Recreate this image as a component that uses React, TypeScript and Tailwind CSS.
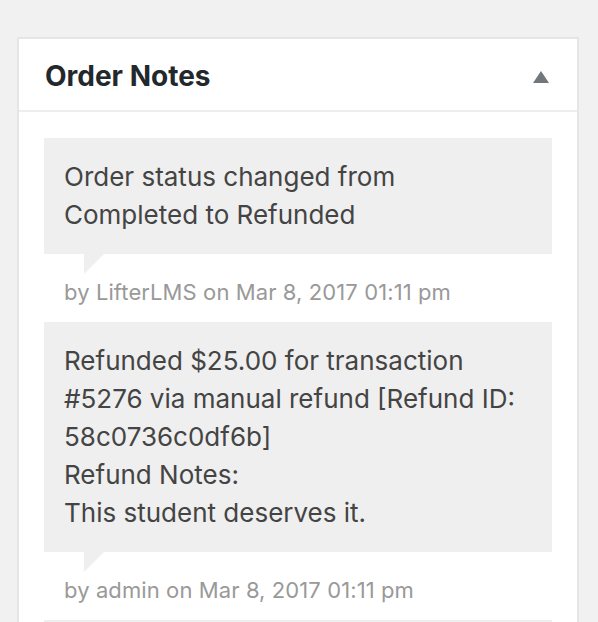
import React from "react";

const notes = [
  {
    lines: ["Order status changed from", "Completed to Refunded"],
    meta: "by LifterLMS on Mar 8, 2017 01:11 pm",
  },
  {
    lines: [
      "Refunded $25.00 for transaction",
      "#5276 via manual refund [Refund ID:",
      "58c0736c0df6b]",
      "Refund Notes:",
      "This student deserves it.",
    ],
    meta: "by admin on Mar 8, 2017 01:11 pm",
  },
];

function Note({ lines, meta }: { lines: string[]; meta: string }) {
  return (
    <li className="list-none">
      <div className="relative bg-[#efefef] px-[20px] py-[20px] text-[26px] leading-[38px] text-[#444]">
        {lines.map((l, i) => (
          <div key={i}>{l}</div>
        ))}
        <span className="absolute left-[40px] top-full h-0 w-0 border-t-[20px] border-r-[20px] border-t-[#efefef] border-r-transparent" />
      </div>
      <div className="h-[68px] px-[20px] pt-[22px] text-[22px] leading-[33px] tracking-[0.1px] text-[#999]">{meta}</div>
    </li>
  );
}

export default function App() {
  return (
    <div
      className="h-[622px] w-[598px] overflow-hidden bg-[#f1f1f1] pl-[17px] pt-[37px]"
      style={{ fontFamily: "Inter, 'Liberation Sans', sans-serif" }}
    >
      <div className="w-[562px] border-2 border-[#e5e5e5] bg-white">
        <div className="flex h-[73px] items-center justify-between border-b-2 border-[#eeeeee] pl-[26px] pr-[28px] pt-[3px]">
          <h2 className="text-[28px] font-bold leading-none text-[#23282d]">Order Notes</h2>
          <svg width="16" height="12" viewBox="0 0 16 12" className="mt-[2px]">
            <polygon points="8,0 16,12 0,12" fill="#72777c" />
          </svg>
        </div>
        <ul className="px-[25px] pt-[26px]">
          {notes.map((n, i) => (
            <Note key={i} lines={n.lines} meta={n.meta} />
          ))}
          <li className="list-none h-[120px] bg-[#efefef]" />
        </ul>
      </div>
    </div>
  );
}
